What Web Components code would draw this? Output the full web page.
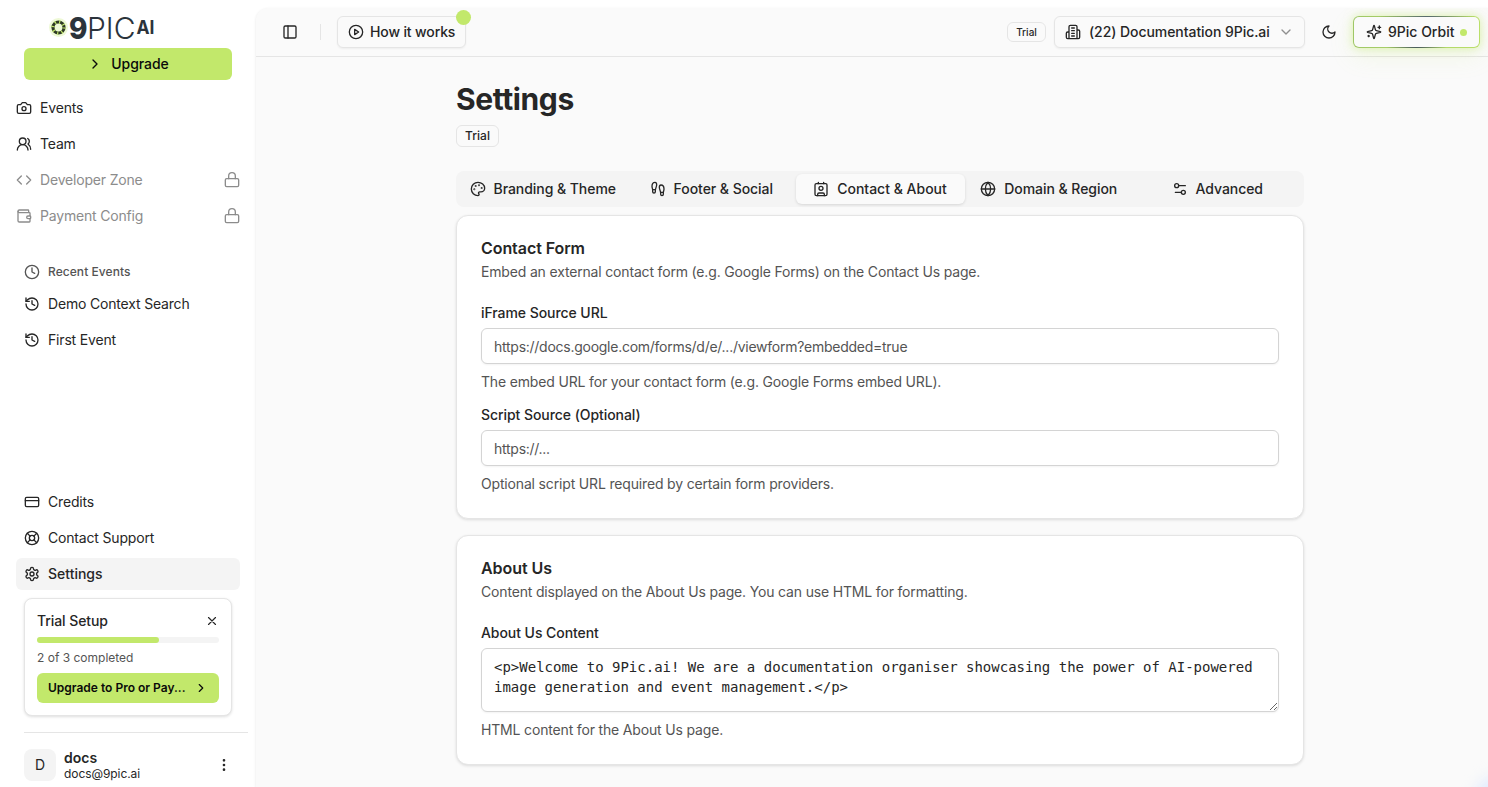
<!DOCTYPE html>
<html lang="en">
<head>
<meta charset="utf-8">
<title>Settings</title>
<style>
html,body{margin:0;height:100%}
body{background:#fff;color:#262626;font:400 14px/20px Inter,sans-serif;overflow:hidden}
</style>
</head>
<body>
<app-shell></app-shell>
<script>
const ICONS={
camera:'<path d="M14.5 4h-5L7 7H4a2 2 0 0 0-2 2v9a2 2 0 0 0 2 2h16a2 2 0 0 0 2-2V9a2 2 0 0 0-2-2h-3l-2.5-3z"/><circle cx="12" cy="13" r="3"/>',
users:'<path d="M18 21a8 8 0 0 0-16 0"/><circle cx="10" cy="8" r="5"/><path d="M22 20c0-3.37-2-6.5-4-8a5 5 0 0 0-.45-8.3"/>',
code:'<path d="m16 18 6-6-6-6M8 6l-6 6 6 6"/>',
wallet:'<path d="M19 7V4a1 1 0 0 0-1-1H5a2 2 0 0 0 0 4h15a1 1 0 0 1 1 1v4h-3a2 2 0 0 0 0 4h3a1 1 0 0 0 1-1v-2a1 1 0 0 0-1-1"/><path d="M3 5v14a2 2 0 0 0 2 2h15a1 1 0 0 0 1-1v-4"/>',
lock:'<rect width="20" height="12" x="2" y="10" rx="2"/><path d="M7 10V6a5 5 0 0 1 10 0v4"/>',
clock:'<circle cx="12" cy="12" r="10"/><path d="M12 6v6l4 2"/>',
history:'<path d="M3 12a9 9 0 1 0 9-9 9.750 9.750 0 0 0-6.740 2.740L3 8"/><path d="M3 3v5h5M12 7v5l4 2"/>',
card:'<rect width="20" height="14" x="2" y="5" rx="2"/><path d="M2 10h20"/>',
support:'<circle cx="12" cy="12" r="10"/><circle cx="12" cy="12" r="4"/><path d="m4.930 4.930 4.240 4.240M14.830 9.170l4.240-4.240M14.830 14.830l4.240 4.240M9.170 14.830l-4.240 4.240"/>',
gear:'<path d="M12.220 2h-.440a2 2 0 0 0-2 2v.180a2 2 0 0 1-1 1.730l-.430.250a2 2 0 0 1-2 0l-.150-.080a2 2 0 0 0-2.730.730l-.220.380a2 2 0 0 0 .730 2.730l.150.100a2 2 0 0 1 1 1.720v.510a2 2 0 0 1-1 1.740l-.150.090a2 2 0 0 0-.730 2.730l.220.380a2 2 0 0 0 2.730.730l.150-.080a2 2 0 0 1 2 0l.430.250a2 2 0 0 1 1 1.730V20a2 2 0 0 0 2 2h.440a2 2 0 0 0 2-2v-.180a2 2 0 0 1 1-1.730l.430-.250a2 2 0 0 1 2 0l.150.080a2 2 0 0 0 2.730-.730l.220-.390a2 2 0 0 0-.730-2.730l-.150-.080a2 2 0 0 1-1-1.740v-.500a2 2 0 0 1 1-1.740l.150-.090a2 2 0 0 0 .730-2.730l-.220-.380a2 2 0 0 0-2.730-.730l-.150.080a2 2 0 0 1-2 0l-.430-.250a2 2 0 0 1-1-1.730V4a2 2 0 0 0-2-2z"/><circle cx="12" cy="12" r="3"/>',
x:'<path d="M18 6 6 18M6 6l12 12"/>',
right:'<path d="m9 18 6-6-6-6"/>',
down:'<path d="m6 9 6 6 6-6"/>',
dots:'<circle cx="12" cy="12" r="1"/><circle cx="12" cy="5" r="1"/><circle cx="12" cy="19" r="1"/>',
panel:'<rect width="18" height="18" x="3" y="3" rx="2"/><path d="M9 3v18"/>',
play:'<circle cx="12" cy="12" r="10"/><path d="m10 8 6 4-6 4z"/>',
building:'<path d="M6 22V4a2 2 0 0 1 2-2h8a2 2 0 0 1 2 2v18zM6 12H4a2 2 0 0 0-2 2v6a2 2 0 0 0 2 2h2M18 9h2a2 2 0 0 1 2 2v9a2 2 0 0 1-2 2h-2M10 6h4M10 10h4M10 14h4M10 18h4"/>',
moon:'<path d="M12 3a6 6 0 0 0 9 9 9 9 0 1 1-9-9z"/>',
sparkles:'<path d="M9.940 15.500A2 2 0 0 0 8.500 14.060l-6.140-1.580a.5.5 0 0 1 0-.960L8.500 9.940A2 2 0 0 0 9.940 8.500l1.580-6.140a.5.5 0 0 1 .960 0L14.060 8.500A2 2 0 0 0 15.500 9.940l6.140 1.580a.5.5 0 0 1 0 .960L15.500 14.060a2 2 0 0 0-1.440 1.440l-1.580 6.140a.5.5 0 0 1-.960 0zM20 3v4M22 5h-4M4 17v2M5 18H3"/>',
palette:'<circle cx="13.500" cy="6.500" r=".5"/><circle cx="17.500" cy="10.500" r=".5"/><circle cx="8.500" cy="7.500" r=".5"/><circle cx="6.500" cy="12.500" r=".5"/><path d="M12 2C6.500 2 2 6.500 2 12s4.500 10 10 10c.930 0 1.650-.750 1.650-1.690 0-.440-.180-.830-.440-1.120-.290-.290-.440-.650-.440-1.130a1.640 1.640 0 0 1 1.670-1.670h2c3.050 0 5.560-2.500 5.560-5.550C21.970 6.010 17.460 2 12 2z"/>',
feet:'<path d="M4 16v-2.380C4 11.500 2.970 10.500 3 8c.030-2.720 1.490-6 4.500-6C9.370 2 10 3.800 10 5.500c0 3.110-2 5.660-2 8.680V16a2 2 0 1 1-4 0zM20 20v-2.380c0-2.120 1.030-3.120 1-5.620-.030-2.720-1.490-6-4.500-6C14.630 6 14 7.800 14 9.500c0 3.110 2 5.660 2 8.680V20a2 2 0 1 0 4 0zM16 17h4M4 13h4"/>',
contact:'<path d="M16 2v2M8 2v2M7 22v-2a2 2 0 0 1 2-2h6a2 2 0 0 1 2 2v2"/><circle cx="12" cy="11" r="3"/><rect width="18" height="18" x="3" y="4" rx="2"/>',
globe:'<circle cx="12" cy="12" r="10"/><path d="M12 2a14.500 14.500 0 0 0 0 20 14.500 14.500 0 0 0 0-20M2 12h20"/>',
sliders:'<path d="M20 7h-9M14 17H5"/><circle cx="17" cy="17" r="3"/><circle cx="7" cy="7" r="3"/>'
};
const define=(name,render,setup)=>customElements.define(name,class extends HTMLElement{
  connectedCallback(){
    if(this.shadowRoot)return;
    const t=document.createElement('template');
    t.innerHTML=render(this);
    this.attachShadow({mode:'open'}).append(t.content.cloneNode(true));
    setup&&setup(this);
  }
});
const at=(e,n,d='')=>e.getAttribute(n)??d;

define('ui-icon',e=>`<style>:host{display:block;flex:none;width:${at(e,'size','16')}px;height:${at(e,'size','16')}px}svg{display:block;width:100%;height:100%}</style>
<svg viewBox="0 0 24 24" fill="none" stroke="currentColor" stroke-width="2" stroke-linecap="round" stroke-linejoin="round">${ICONS[at(e,'name')]}</svg>`);

define('brand-logo',()=>`<style>:host{display:block;width:112px;height:32px}svg{display:block;overflow:visible}text{font-family:Inter,sans-serif;fill:#2b333b}</style>
<svg width="112" height="40" viewBox="0 0 112 40">
<circle cx="10.500" cy="19.500" r="9.500" fill="#eef9d6"/>
<circle cx="10.500" cy="19.500" r="5.500" fill="none" stroke="#2e3a24" stroke-width="3.200"/>
<circle cx="10.500" cy="19.500" r="5.500" fill="none" stroke="#c2e86b" stroke-width="3.400" stroke-dasharray="1.100 3.220"/>
<text x="21" y="31" font-size="30" font-weight="800" textLength="18.500" lengthAdjust="spacingAndGlyphs">9</text>
<text x="39" y="31" font-size="30" font-weight="300" textLength="48.500" lengthAdjust="spacingAndGlyphs">PIC</text>
<text x="88.500" y="25.500" font-size="18.500" font-weight="700" textLength="18" lengthAdjust="spacingAndGlyphs">AI</text>
</svg>`);

define('nav-item',e=>`<style>
:host{display:flex;align-items:center;gap:8px;height:32px;padding:0 8px;border-radius:6px;box-sizing:border-box;color:#262626;letter-spacing:-.18px}
:host([locked]){color:#8c8c8c}
:host([active]){background:#f4f4f4;font-weight:500;letter-spacing:0}
:host([caption]){color:#545454;font-size:12px;font-weight:500;letter-spacing:.06px}
span{flex:1}
</style><ui-icon name="${at(e,'icon')}"></ui-icon><span><slot></slot></span>${e.hasAttribute('locked')?'<ui-icon name="lock"></ui-icon>':''}`);

define('trial-card',()=>`<style>
:host{display:block;box-sizing:border-box;width:208px;height:118px;margin-left:8px;padding:12px;border:1px solid #e5e5e5;border-radius:8px;background:#fff;box-shadow:0 1px 3px #0002}
.top{display:flex;justify-content:space-between;align-items:center;height:20px;font-weight:500;letter-spacing:-.08px}
.bar{height:6px;border-radius:3px;background:#f4f4f4;margin-top:6px}
.bar i{display:block;width:67%;height:6px;border-radius:3px;background:#c2e86b}
.note{font-size:12px;line-height:16px;color:#545454;margin-top:7px}
.go{display:flex;align-items:center;justify-content:space-between;height:30px;margin-top:7px;padding:0 11px;border-radius:6px;background:#c2e86b;color:#0a0a0a;font-size:12px;font-weight:600}
</style><div class="top"><span>Trial Setup</span><ui-icon name="x" size="14"></ui-icon></div>
<div class="bar"><i></i></div><div class="note">2 of 3 completed</div>
<div class="go"><span>Upgrade to Pro or Pay...</span><ui-icon name="right" size="14"></ui-icon></div>`);

define('user-row',()=>`<style>
:host{display:flex;align-items:center;gap:8px;height:48px;margin-left:8px;padding-right:8px}
.av{display:grid;place-items:center;width:32px;height:32px;border-radius:8px;background:#f4f4f4}
.who{flex:1;display:flex;flex-direction:column}
b{font-weight:600;line-height:17px}small{font-size:12px;line-height:16px;letter-spacing:-.08px}
</style><div class="av">D</div><div class="who"><b>docs</b><small>docs@9pic.ai</small></div><ui-icon name="dots"></ui-icon>`);

define('app-sidebar',()=>`<style>
:host{display:flex;flex-direction:column;box-sizing:border-box;width:256px;height:787px;padding:8px 16px 0;background:#fff}
brand-logo{margin:0 0 0 32px;padding-bottom:8px}
.up{display:flex;align-items:center;justify-content:center;gap:8px;height:32px;margin:0 8px;border-radius:6px;background:#c2e86b;color:#0a0a0a;font-weight:500;letter-spacing:-.06px}
.list{display:flex;flex-direction:column;gap:4px}
.main{margin:12px 0 0 -8px;width:240px}
.recent{margin-top:24px;gap:0}
.recent nav-item+nav-item+nav-item{margin-top:4px}
.bottom{margin-top:auto}
trial-card{margin-top:8px}
hr{width:224px;height:1px;border:0;margin:16px 0 8px 8px;background:#e5e5e5;flex:none}
user-row{margin-bottom:-2px;flex:none}
</style><brand-logo></brand-logo>
<div class="up"><ui-icon name="right"></ui-icon><span>Upgrade</span></div>
<div class="list main"><nav-item icon="camera">Events</nav-item><nav-item icon="users">Team</nav-item><nav-item icon="code" locked>Developer Zone</nav-item><nav-item icon="wallet" locked>Payment Config</nav-item></div>
<div class="list recent"><nav-item icon="clock" caption>Recent Events</nav-item><nav-item icon="history">Demo Context Search</nav-item><nav-item icon="history">First Event</nav-item></div>
<div class="list bottom"><nav-item icon="card">Credits</nav-item><nav-item icon="support">Contact Support</nav-item><nav-item icon="gear" active>Settings</nav-item></div>
<trial-card></trial-card><hr><user-row></user-row>`);

define('ui-badge',()=>`<style>:host{display:inline-flex;align-items:center;justify-content:center;box-sizing:border-box;width:var(--w,43px);height:var(--h,22px);border:1px solid #e5e5e5;border-radius:6px;font-size:var(--fs,12px);line-height:16px;font-weight:500}</style><slot></slot>`);

define('app-header',()=>`<style>
:host{display:flex;align-items:center;box-sizing:border-box;height:49px;border-bottom:1px solid #e5e5e5;padding:0 8px 0 26px;font-weight:500;white-space:nowrap}
.btn{display:flex;align-items:center;gap:6px;box-sizing:border-box;height:32px;border:1px solid #e5e5e5;border-radius:6px;background:#fafafa;box-shadow:0 1px 2px #0000000d}
.sep{width:1px;height:16px;background:#e5e5e5;margin:0 16px 0 22px}
.how{position:relative;width:129px;padding-left:10px;letter-spacing:-.13px}
.how i{position:absolute;right:-6px;top:-7px;width:15px;height:15px;border-radius:50%;background:#c2e86b}
.sp{flex:1}
ui-badge{--w:39px;--h:20px;--fs:10px;margin-right:8px}
.org{width:251px;padding:0 10px;gap:8px;margin-right:16px;letter-spacing:-.06px}
.org span{flex:1}.org ui-icon:last-child{opacity:.5}
.orbit{width:127px;margin-left:16px;padding-left:12px;gap:6px;border:1.500px solid transparent;border-radius:6px;background:linear-gradient(#fafafa,#fafafa) padding-box,radial-gradient(ellipse 30px 5px at 50% 100%,#42515a,#4a625000),radial-gradient(ellipse 48px 8px at 58% 0,#53656e,#53656e00),linear-gradient(90deg,#9fc766,#badf6a) border-box;background-origin:border-box;background-clip:padding-box,border-box,border-box,border-box;box-shadow:0 0 10px #c2e86b88,0 8px 24px #c2e86b26}
.orbit i{width:7px;height:7px;border-radius:50%;background:#c2e86b}
</style><ui-icon name="panel"></ui-icon><div class="sep"></div>
<div class="btn how"><ui-icon name="play"></ui-icon><span>How it works</span><i></i></div><div class="sp"></div>
<ui-badge>Trial</ui-badge><div class="btn org"><ui-icon name="building"></ui-icon><span>(22) Documentation 9Pic.ai</span><ui-icon name="down"></ui-icon></div>
<ui-icon name="moon"></ui-icon><div class="btn orbit"><ui-icon name="sparkles"></ui-icon><span>9Pic Orbit</span><i></i></div>`);

define('tab-item',e=>`<style>
:host{display:flex;align-items:center;justify-content:center;gap:8px;box-sizing:border-box;height:30px;border-radius:6px;font-weight:500;white-space:nowrap;letter-spacing:-.05px}
:host([active]){background:#fafafa;box-shadow:0 1px 3px #0000001f;letter-spacing:0}
</style><ui-icon name="${at(e,'icon')}"></ui-icon><slot></slot>`);
define('tab-bar',()=>`<style>:host{display:grid;grid-template-columns:168.500px 168.500px 169px 168.500px 168.500px;box-sizing:border-box;height:36px;padding:3px 2.500px;border-radius:8px;background:#f4f4f4}</style><slot></slot>`);

define('settings-card',e=>`<style>
:host{display:flex;flex-direction:column;box-sizing:border-box;padding:22px 24px 24px;border:1px solid #e5e5e5;border-radius:12px;background:#fff;box-shadow:0 1px 3px #0000001f}
h2{margin:0;font-size:16px;line-height:20px;font-weight:600;letter-spacing:-.07px}
p{margin:4px 0 21px;color:#545454;letter-spacing:-.17px}
.body{display:flex;flex-direction:column;gap:13px}
</style><h2>${at(e,'heading')}</h2><p>${at(e,'text')}</p><div class="body"><slot></slot></div>`);

define('form-field',e=>`<style>
:host{display:flex;flex-direction:column}
label{font-weight:500;margin-bottom:5px;letter-spacing:-.06px}
input,textarea{display:block;box-sizing:border-box;width:100%;border:1px solid #d4d4d4;border-radius:6px;margin:0;background:#fff;color:#262626;font:400 14px/20px Inter,sans-serif;outline:0;box-shadow:0 1px 2px #0000000d}
input{height:36px;padding:0 12px;letter-spacing:-.26px}
input::placeholder{color:#545454;opacity:1}
textarea{height:64px;padding:8px 12px;font-family:"DejaVu Sans Mono",monospace;resize:vertical}
small{font-size:14px;line-height:20px;color:#545454;margin-top:8px;letter-spacing:-.165px}
</style><label>${at(e,'label')}</label>${e.hasAttribute('area')?'<textarea spellcheck="false"></textarea>':`<input placeholder="${at(e,'hint')}">`}<small>${at(e,'help')}</small>`,
e=>{const a=e.shadowRoot.querySelector('textarea');if(a)a.textContent=e.textContent.trim()});

define('settings-page',()=>`<style>
:host{display:flex;flex-direction:column;width:848px;margin:24px 0 0 200px}
h1{margin:0;font-size:30px;line-height:36px;font-weight:700;letter-spacing:-.4px}
ui-badge{align-self:flex-start;margin:8px 0 24px}
settings-card{margin-top:8px;height:304px;flex:none}
settings-card+settings-card{margin-top:16px;height:230px}
</style><h1>Settings</h1><ui-badge>Trial</ui-badge>
<tab-bar><tab-item icon="palette">Branding &amp; Theme</tab-item><tab-item icon="feet">Footer &amp; Social</tab-item><tab-item icon="contact" active>Contact &amp; About</tab-item><tab-item icon="globe">Domain &amp; Region</tab-item><tab-item icon="sliders">Advanced</tab-item></tab-bar>
<settings-card heading="Contact Form" text="Embed an external contact form (e.g. Google Forms) on the Contact Us page.">
<form-field label="iFrame Source URL" hint="https://docs.google.com/forms/d/e/.../viewform?embedded=true" help="The embed URL for your contact form (e.g. Google Forms embed URL)."></form-field>
<form-field label="Script Source (Optional)" hint="https://..." help="Optional script URL required by certain form providers."></form-field></settings-card>
<settings-card heading="About Us" text="Content displayed on the About Us page. You can use HTML for formatting.">
<form-field area label="About Us Content" help="HTML content for the About Us page.">&lt;p&gt;Welcome to 9Pic.ai! We are a documentation organiser showcasing the power of AI-powered image generation and event management.&lt;/p&gt;</form-field></settings-card>`);

define('app-shell',()=>`<style>
:host{display:grid;grid-template-columns:256px 1fr;height:787px;overflow:hidden;background:#fff}
main{position:relative;margin-top:8px;border-radius:12px 0 0 0;background:#fafafa;box-shadow:0 1px 3px #0000001a;overflow:hidden}
.glow{position:absolute;right:-50px;bottom:-52px;width:64px;height:64px;border-radius:50%;background:#dbe7ff;filter:blur(8px)}
</style><app-sidebar></app-sidebar><main><app-header></app-header><settings-page></settings-page><div class="glow"></div></main>`);
</script>
</body>
</html>
